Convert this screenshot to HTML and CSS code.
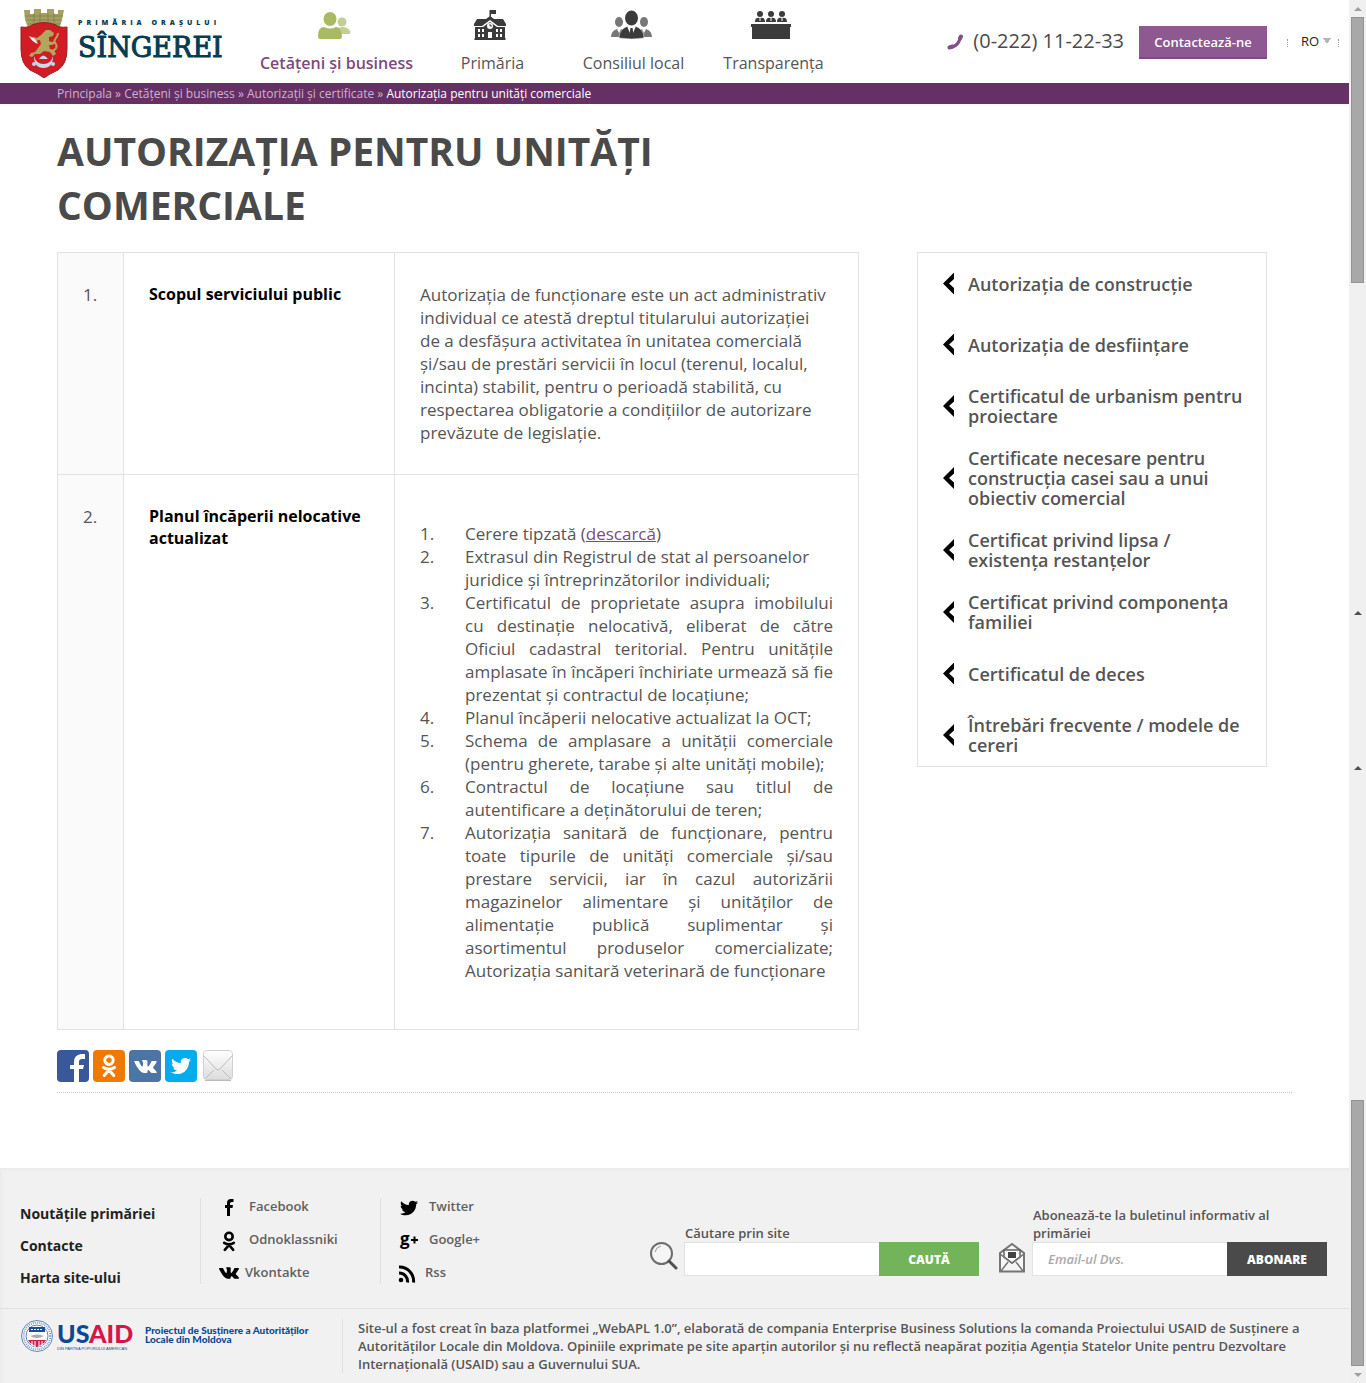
FILE: index.html
```html
<!DOCTYPE html>
<html lang="ro">
<head>
<meta charset="utf-8">
<meta name="viewport" content="width=device-width, initial-scale=1">
<title>Autorizația pentru unități comerciale</title>
<link rel="stylesheet" href="styles.css">
</head>
<body>
<svg class="sprite" aria-hidden="true">
  <symbol id="i-twitter" viewBox="0 0 512 512"><path d="M459.37 151.716c.325 4.548.325 9.097.325 13.645 0 138.72-105.583 298.558-298.558 298.558-59.452 0-114.68-17.219-161.137-47.106 8.447.974 16.568 1.299 25.34 1.299 49.055 0 94.213-16.568 130.274-44.832-46.132-.975-84.792-31.188-98.112-72.772 6.498.974 12.995 1.624 19.818 1.624 9.421 0 18.843-1.3 27.614-3.573-48.081-9.747-84.143-51.98-84.143-102.985v-1.299c13.969 7.797 30.214 12.67 47.431 13.319-28.264-18.843-46.781-51.005-46.781-87.391 0-19.492 5.197-37.36 14.294-52.954 51.655 63.675 129.3 105.258 216.365 109.807-1.624-7.797-2.599-15.918-2.599-24.04 0-57.828 46.782-104.934 104.934-104.934 30.213 0 57.502 12.67 76.67 33.137 23.715-4.548 46.456-13.32 66.599-25.34-7.798 24.366-24.366 44.833-46.132 57.827 21.117-2.273 41.584-8.122 60.426-16.243-14.292 20.791-32.161 39.308-52.628 54.253z"/></symbol>
  <symbol id="i-vk" viewBox="0 4 24 16"><path d="M13.162 18.994c.609 0 .858-.406.851-.915-.031-1.917.714-2.949 2.059-1.604 1.488 1.488 1.796 2.519 3.603 2.519h3.2c.808 0 1.126-.26 1.126-.668 0-.863-1.421-2.386-2.625-3.504-1.686-1.565-1.765-1.602-.313-3.486 1.801-2.339 4.157-5.336 2.073-5.336h-3.981c-.772 0-.828.435-1.103 1.083-.995 2.347-2.886 5.387-3.604 4.922-.751-.485-.407-2.406-.35-5.261.015-.754.011-1.271-1.141-1.539-.629-.145-1.241-.205-1.809-.205-2.273 0-3.841.953-2.95 1.119 1.571.293 1.42 3.692 1.054 5.16-.638 2.556-3.036-2.024-4.035-4.305-.241-.548-.315-.974-1.175-.974h-3.255c-.492 0-.787.16-.787.516 0 .602 2.96 6.72 5.786 9.77 2.756 2.975 5.48 2.708 7.376 2.708z"/></symbol>
  <symbol id="i-ok" viewBox="0 0 16 24"><g fill="none" stroke="currentColor" stroke-width="3" stroke-linecap="round"><circle cx="8" cy="6.200" r="4.200"/><path d="M2.500 13.500Q8 17 13.500 13.500M8 16L3.200 21.500M8 16l4.800 5.500"/></g></symbol>
</svg>
<div class="page">
  <header class="header">
    <a class="logo" href="#">
      <svg class="crest" viewBox="0 0 48 70" aria-hidden="true">
        <path d="M4 2h6v4h4V1h7v4h6V1h7v5h4V2h6l-2 10-3 10q-16-7-30 0L5 12z" fill="#a6a063"/>
        <path d="M5 8h38M7 12h34M8 16h32M14 5v11M20 5v11M28 5v11M34 5v11" stroke="#77733f" fill="none" stroke-width=".6"/>
        <path d="M1 19q8 1 11-2 12-5 24 0 3 3 11 2v22q0 15-9 21-9 4-14 8-5-4-14-8-9-6-9-21z" fill="#d01c22" stroke="#8b2324"/>
        <path d="M24 24l2-2 4 0 4 3-1 3-4 1 0 4 3 1 3-1 1 2-4 2-3 0 1 4 4 1 2 4-3 2-3-4-6-1-4 3-5 0-3 3-3-1 2-3 4-1 3-4 3-4-1-4-5 1-3-2 1-2 4 1 4-3z" fill="#b3a55e"/>
        <path d="M32 43q6-2 4-7-3-2 0-6 2-2 2-5" stroke="#b3a55e" stroke-width="2" fill="none"/>
        <path d="M9 28q7 2 9 8-6-2-9-8z" fill="#e8eef4"/>
        <path d="M14 48q0 12 9.500 12T33 48q-2 8-9.500 8T14 48z" fill="#c9d9e8"/>
        <path d="M19 51q4-7 9 0z" fill="#c9d9e8"/>
        <circle cx="14" cy="56" r="2" fill="#b9dcf0"/><circle cx="33" cy="56" r="2" fill="#b9dcf0"/>
      </svg>
      <span class="logo-text"><span class="logo-top">PRIMĂRIA ORAȘULUI</span><span class="logo-name">SÎNGEREI</span></span>
    </a>
    <nav class="nav">
      <a class="nav-item active" href="#">
        <svg width="32" height="30" viewBox="0 0 32 30"><g fill="#c2cf93"><circle cx="24" cy="12" r="4.500"/><path d="M20 24v-6q8-3 12 3v3z"/></g><g fill="#a9ba65"><ellipse cx="12" cy="9" rx="6.500" ry="7"/><path d="M0 26q0-9 6-9 6 3 12 0 5 0 6 9 0 3-2 3H2q-2 0-2-3z"/></g></svg>
        Cetățeni și business</a>
      <a class="nav-item" href="#">
        <svg width="32" height="30" viewBox="0 0 32 30"><g fill="#3b3b3b"><path d="M15.500 0H22v4h-5v4h-1.500zM0 14l3-5h9l4-3 4 3h9l3 5v2h-8l-8-6-8 6H0z"/><path d="M1 17h8l7-5 7 5h8v13H1z"/></g><g fill="#fff"><circle cx="16" cy="16" r="3"/><path d="M4 19h2v3H4zM8 19h2v3H8zM4 24h2v3H4zM8 24h2v3H8zM22 19h2v3h-2zM26 19h2v3h-2zM22 24h2v3h-2zM26 24h2v3h-2zM14 22h4v6h-4z"/></g><path d="M16 14v2h2M0 29h32" fill="none" stroke="#3b3b3b"/></svg>
        Primăria</a>
      <a class="nav-item" href="#">
        <svg width="41" height="30" viewBox="0 0 41 30"><g fill="#777"><ellipse cx="8" cy="12" rx="4" ry="5"/><ellipse cx="33" cy="12" rx="4" ry="5"/><path d="M0 27q0-6 6-8l2 4 2-4 4 2v6zM41 27q0-6-6-8l-2 4-2-4-4 2v6z"/></g><ellipse cx="20.500" cy="8" rx="6.500" ry="7.500" fill="#3b3b3b"/><path d="M8 28q0-9 9-12l3.500 7 3.500-7q9 3 9 12-12 2-25 0z" fill="#3b3b3b" stroke="#fff" stroke-width=".5"/><path d="M16 16l4.500 11L25 16l-3 1h-3z" fill="#fff"/><path d="M19.500 18h2l1 6-2 4-2-4z" fill="#3b3b3b"/></svg>
        Consiliul local</a>
      <a class="nav-item" href="#">
        <svg width="40" height="30" viewBox="0 0 40 30"><g fill="#3b3b3b"><circle cx="9" cy="4" r="3"/><circle cx="20" cy="4" r="3"/><circle cx="31" cy="4" r="3"/><path d="M4 12q0-5 5-4 5-1 5 4zM15 12q0-5 5-4 5-1 5 4zM26 12q0-5 5-4 5-1 5 4zM0 14h40v3h-1v12H1V17H0z"/></g><path d="M9 8v3M20 8v3M31 8v3" stroke="#fff"/></svg>
        Transparența</a>
    </nav>
    <div class="contact">
      <svg width="16" height="16" viewBox="0 0 16 16" aria-hidden="true"><path d="M2 13.500Q12 13 13.500 2" fill="none" stroke="#85508a" stroke-width="3"/><path d="M2.500 13.500l3-1M13 4.500l1-2" fill="none" stroke="#85508a" stroke-width="4" stroke-linecap="round"/></svg>
      <span class="phone">(0-222) 11-22-33</span>
      <button class="contact-btn" type="button">Contactează-ne</button>
    </div>
    <div class="lang"><select aria-label="Limba"><option>RO</option></select></div>
  </header>
  <nav class="crumbs"><a href="#">Principala</a> » <a href="#">Cetățeni și business</a> » <a href="#">Autorizații și certificate</a> » <span>Autorizația pentru unități comerciale</span></nav>

  <div class="content">
    <div class="columns">
      <main class="main">
        <h1>AUTORIZAȚIA PENTRU UNITĂȚI COMERCIALE</h1>
        <table class="info">
          <tr>
            <td class="num">1.</td>
            <th scope="row">Scopul serviciului public</th>
            <td>Autorizaţia de funcționare este un act administrativ individual ce atestă dreptul titularului autorizaţiei de a desfăşura activitatea în unitatea comercială şi/sau de prestări servicii în locul (terenul, localul, incinta) stabilit, pentru o perioadă stabilită, cu respectarea obligatorie a condiţiilor de autorizare prevăzute de legislaţie.</td>
          </tr>
          <tr>
            <td class="num">2.</td>
            <th scope="row">Planul încăperii nelocative actualizat</th>
            <td>
              <ol class="docs">
                <li>Cerere tipzată (<a href="#">descarcă</a>)</li>
                <li>Extrasul din Registrul de stat al persoanelor juridice și întreprinzătorilor individuali;</li>
                <li class="just">Certificatul de proprietate asupra imobilului cu destinaţie nelocativă, eliberat de către Oficiul cadastral teritorial. Pentru unităţile amplasate în încăperi închiriate urmează să fie prezentat şi contractul de locaţiune;</li>
                <li class="just">Planul încăperii nelocative actualizat la OCT;</li>
                <li class="just">Schema de amplasare a unităţii comerciale (pentru gherete, tarabe şi alte unităţi mobile);</li>
                <li class="just">Contractul de locaţiune sau titlul de autentificare a deţinătorului de teren;</li>
                <li class="just">Autorizaţia sanitară de funcţionare, pentru toate tipurile de unităţi comerciale şi/sau prestare servicii, iar în cazul autorizării magazinelor alimentare şi unităţilor de alimentaţie publică suplimentar şi asortimentul produselor comercializate; Autorizaţia sanitară veterinară de funcţionare</li>
              </ol>
            </td>
          </tr>
        </table>
      </main>
      <aside class="side">
        <ul>
          <li><a href="#">Autorizația de construcție</a></li>
          <li><a href="#">Autorizația de desființare</a></li>
          <li><a href="#">Certificatul de urbanism pentru proiectare</a></li>
          <li><a href="#">Certificate necesare pentru construcția casei sau a unui obiectiv comercial</a></li>
          <li><a href="#">Certificat privind lipsa / existența restanțelor</a></li>
          <li><a href="#">Certificat privind componența familiei</a></li>
          <li><a href="#">Certificatul de deces</a></li>
          <li><a href="#">Întrebări frecvente / modele de cereri</a></li>
        </ul>
      </aside>
    </div>
    <div class="share">
      <a class="fb" href="#" aria-label="Facebook"><svg viewBox="0 0 32 32"><path d="M17 32V19h-4v-4h4v-3q0-7 7-8h4v5h-3q-3 0-3 3v3h5l-1 4h-4v13z" fill="#fff"/></svg></a>
      <a class="ok" href="#" aria-label="Odnoklassniki"><svg viewBox="0 0 32 32"><use href="#i-ok" x="8" y="3" width="16" height="26"/></svg></a>
      <a class="vk" href="#" aria-label="Vkontakte"><svg viewBox="0 0 32 32" fill="#fff"><use href="#i-vk" x="5" y="9" width="23" height="15"/></svg></a>
      <a class="tw" href="#" aria-label="Twitter"><svg viewBox="0 0 32 32" fill="#fff"><use href="#i-twitter" x="6" y="6" width="20" height="20"/></svg></a>
      <a class="ml" href="#" aria-label="E-mail"><svg viewBox="0 0 32 32"><defs><linearGradient id="env" x2="0" y2="1"><stop stop-color="#fff"/><stop offset="1" stop-color="#dcdcdc"/></linearGradient></defs><rect x="2.500" y=".5" width="29" height="29" rx="3" fill="url(#env)" stroke="#d0d0d0"/><path d="M3 6l12 13q2 2 4 0L31 6M4 29l9-9M30 29l-9-9" fill="none" stroke="#bdbdbd"/><path d="M4 30.500h26" stroke="#bbb"/></svg></a>
    </div>
  </div>

  <footer class="footer">
    <div class="foot-top">
      <nav class="foot-links"><a href="#">Noutățile primăriei</a><a href="#">Contacte</a><a href="#">Harta site-ului</a></nav>
      <nav class="social">
        <a href="#"><svg viewBox="0 0 22 22"><path d="M9 18v-8H7V7h2V5q0-4 4-4h2.500v3H14q-2 0-2 1.500V7h3l-.5 3H12v8z"/></svg>Facebook</a>
        <a href="#"><svg viewBox="0 0 22 22"><use href="#i-ok" x="4" y="0" width="14" height="21"/></svg>Odnoklassniki</a>
        <a class="tight" href="#"><svg viewBox="0 0 22 22"><use href="#i-vk" x="1" y="2" width="20" height="14"/></svg>Vkontakte</a>
      </nav>
      <nav class="social">
        <a href="#"><svg viewBox="0 0 22 22"><use href="#i-twitter" x="2" y="1" width="18" height="18"/></svg>Twitter</a>
        <a href="#"><svg viewBox="0 0 22 22"><text class="gplus" x="2" y="14">g</text><path d="M13 9h7M16.500 5.500v7" stroke="#000" stroke-width="2"/></svg>Google+</a>
        <a class="tight" href="#"><svg viewBox="0 0 22 22"><circle cx="3" cy="16" r="2.300"/><path d="M1 9a8.500 8.500 0 0 1 8.500 9.500M1 3a14 14 0 0 1 14.500 15.500" fill="none" stroke="#000" stroke-width="3"/></svg>Rss</a>
      </nav>
      <div class="forms">
        <form class="form">
          <svg width="28" height="34" viewBox="0 0 28 34" aria-hidden="true"><circle cx="11.500" cy="11.500" r="10.500" fill="#f5f5f5" stroke="#6d6d6d" stroke-width="2"/><path d="M5 10q1-5 6-6" stroke="#999" fill="none"/><path d="M19 19l7 7" stroke="#505050" stroke-width="3" stroke-linecap="round"/></svg>
          <div class="field">
            <label for="q">Căutare prin site</label>
            <div class="row"><input id="q" type="text"><button class="green" type="button">CAUTĂ</button></div>
          </div>
        </form>
        <form class="form">
          <svg width="28" height="34" viewBox="0 0 28 34" aria-hidden="true"><path d="M2 11l12-9 12 9v18.500H2z" fill="#f5f5f5" stroke="#757575" stroke-width="2"/><path d="M6 15V8h16v7l-8 6z" fill="#fff" stroke="#606060" stroke-width="1.500"/><path d="M10 10h8v6h-8z" fill="#444"/><path d="M2 12l12 9 12-9M3 29l7-9M25 29l-7-9" fill="none" stroke="#757575" stroke-width="1.500"/></svg>
          <div class="field">
            <label for="em">Abonează-te la buletinul informativ al primăriei</label>
            <div class="row"><input id="em" type="email" placeholder="Email-ul Dvs."><button class="dark" type="button">ABONARE</button></div>
          </div>
        </form>
      </div>
    </div>
    <div class="foot-bottom">
      <div class="usaid">
        <svg width="34" height="34" viewBox="0 0 34 34" aria-hidden="true"><circle cx="17" cy="17" r="15.500" fill="#fff" stroke="#5f86b5"/><circle cx="17" cy="17" r="13.300" fill="none" stroke="#7f9cc2" stroke-width="2" stroke-dasharray="1 1"/><circle cx="17" cy="17" r="11" fill="#fff" stroke="#5f86b5"/><path d="M9 8h16v5H9z" fill="#1c4f91"/><path d="M11 10.500h12" stroke="#fff" stroke-dasharray="2 1"/><path d="M10 17q7-3 14 0-7 4-14 0z" fill="#aaa"/><path d="M8 21h18l-2 3-7 4-7-4z" fill="#c9234a"/><path d="M12 22v5M15 22v6M19 22v6M22 22v5" stroke="#fff"/></svg>
        <div class="usaid-mark"><span class="usaid-name">US<b>AID</b></span><span class="usaid-tag">DIN PARTEA POPORULUI AMERICAN</span></div>
        <p>Proiectul de Susținere a Autorităților Locale din Moldova</p>
      </div>
      <p class="legal">Site-ul a fost creat în baza platformei „WebAPL 1.0”, elaborată de compania Enterprise Business Solutions la comanda Proiectului USAID de Susținere a Autorităților Locale din Moldova. Opiniile exprimate pe site aparțin autorilor și nu reflectă neapărat poziția Agenţia Statelor Unite pentru Dezvoltare Internaţională (USAID) sau a Guvernului SUA.</p>
    </div>
  </footer>
</div>
<div class="scroll" aria-hidden="true">
  <span class="arrow up"></span>
  <span class="thumb"></span>
  <span class="arrow up mark first"></span>
  <span class="arrow up mark second"></span>
  <span class="thumb last"></span>
  <span class="arrow down"></span>
</div>
</body>
</html>
```
FILE: styles.css
```css
* { box-sizing: border-box; }
body { margin: 0; display: flex; min-height: 100vh; background: #fff; color: #4a4a4a; font-family: "Open Sans", "Noto Sans", sans-serif; font-size: 13px; }
a { color: inherit; text-decoration: none; }
svg { display: block; flex: none; }
.sprite { position: absolute; width: 0; height: 0; }
.page { flex: 1; min-width: 0; display: flex; flex-direction: column; }

/* header */
.header { display: flex; height: 83px; padding-left: 20px; }
.logo { display: flex; width: 231px; padding-top: 8px; gap: 10px; }
.crest { width: 48px; height: 70px; }
.logo-text { display: flex; flex-direction: column; gap: 3px; color: #073b50; white-space: nowrap; padding-top: 10px; }
.logo-top { font-size: 7px; line-height: 10px; font-weight: 800; letter-spacing: 4px; }
.logo-name { font: 27px/34px "DejaVu Serif", serif; -webkit-text-stroke: 1px #073b50; }
.nav { display: grid; grid-template-columns: 171px 141px 141px 139px; padding-top: 10px; }
.nav-item { display: flex; flex-direction: column; align-items: center; gap: 12px; font-size: 16px; line-height: 22px; color: #555; }
.nav-item svg { margin-right: 5px; }
.nav-item.active { color: #7c4a80; font-weight: 600; }
.contact { display: flex; align-items: center; margin-left: auto; margin-right: 20px; height: 85px; }
.contact svg { margin-bottom: 2px; }
.phone { font-size: 20px; line-height: 24px; font-weight: 500; margin: 0 15px 0 10px; padding-bottom: 4px; }
.contact-btn { height: 33px; width: 128px; padding: 0; border: 0; border-bottom: 2px solid #7b4c7f; background: #8e5890; color: #fff; font: 600 13px/18px "Open Sans", sans-serif; }
.lang { display: flex; align-items: center; align-self: center; width: 52px; margin-right: 10px; padding-left: 14px; position: relative; }
.lang::before, .lang::after { content: ""; position: absolute; top: 8px; height: 8px; border-left: 1px dotted #999; }
.lang::before { left: 0; }
.lang::after { right: 0; }
.lang select { appearance: none; border: 0; padding: 0 0 2px; width: 32px; height: 22px; color: #222; font: 13px/20px "Open Sans", sans-serif; background: linear-gradient(to bottom right, #b5b5b5 50%, transparent 50%) 26px 7px / 4px 6px no-repeat, linear-gradient(to bottom left, #b5b5b5 50%, transparent 50%) 22px 7px / 4px 6px no-repeat; }
.crumbs { height: 21px; padding-left: 57px; background: #663065; color: #cfb2d0; font-size: 12px; line-height: 21px; }
.crumbs span { color: #fff; }

/* content */
.content { padding: 20px 57px 0; }
.columns { display: flex; gap: 58px; align-items: flex-start; padding-right: 25px; }
.main { flex: 1; min-width: 0; }
h1 { margin: 0 0 20px; font-size: 39px; line-height: 54px; font-weight: 700; }
.info { width: 100%; border-collapse: collapse; table-layout: fixed; font-size: 17px; line-height: 23px; color: #555; }
.info td, .info th { border: 1px solid #e2e2e2; padding: 30px 25px; vertical-align: top; text-align: left; }
.info .num { width: 66px; background: #fafafa; }
.info th { width: 271px; color: #000; font-size: 16px; line-height: 22px; font-weight: 700; }
.docs { margin: 17px 0; padding: 0; list-style: none; counter-reset: doc; }
.docs li { padding-left: 45px; counter-increment: doc; }
.docs li::before { content: counter(doc) "."; float: left; margin-left: -45px; }
.docs .just { text-align: justify; }
.docs a { color: #7c4a80; text-decoration: underline; }
.side { width: 350px; margin-top: 128px; border: 1px solid #e2e2e2; padding: 0 16px 0 25px; }
.side ul { margin: 0; padding: 0; list-style: none; }
.side a { display: flex; align-items: center; min-height: 61px; padding: 11px 0; font-size: 18px; line-height: 20px; font-weight: 600; color: #555; }
.side a::before { content: ""; flex: none; width: 11px; height: 22px; margin-right: 14px; background: #000; clip-path: polygon(100% 0, 0 50%, 100% 100%, 100% 70%, 55% 50%, 100% 30%); }
.share { display: flex; gap: 4px; padding: 20px 0 10px; border-bottom: 1px dotted #ccc; }
.share a { width: 32px; height: 32px; border-radius: 4px; overflow: hidden; color: #fff; }
.share .fb { background: #39579a; }
.share .ok { background: #ee7a05; }
.share .vk { background: #4d75a3; }
.share .tw { background: #05aced; }

/* footer */
.footer { margin-top: 75px; flex: 1; background: #f1f1f1; box-shadow: inset 2px 2px 2px #ebebeb; font-weight: 600; color: #555; }
.foot-top { display: flex; height: 140px; padding: 30px 22px 0 20px; }
.foot-links { width: 180px; display: flex; flex-direction: column; font-size: 14px; line-height: 32px; font-weight: 700; color: #222; }
.social { width: 180px; height: 86px; border-left: 1px solid #e0e0e0; padding-left: 17px; color: #606060; }
.social a { display: flex; align-items: flex-start; gap: 9px; height: 33px; line-height: 17px; }
.social svg { width: 22px; height: 22px; fill: #000; color: #000; overflow: visible; }
.social .tight { gap: 5px; }
.gplus { font: 700 17px "Open Sans", sans-serif; }
.forms { display: flex; align-items: flex-end; gap: 19px; margin-left: auto; height: 78px; }
.form { display: flex; align-items: flex-end; gap: 6px; }
.field { width: 295px; line-height: 18px; }
.field label { display: block; padding-right: 50px; padding-left: 1px; }
.row { display: flex; }
.row input { flex: 1; min-width: 0; height: 34px; border: 1px solid #e2e2e2; border-right: 0; padding: 0 15px; background: #fff; font: 600 13px "Open Sans", sans-serif; }
.row input::placeholder { color: #aaa; font-style: italic; opacity: 1; }
.row button { width: 100px; height: 34px; border: 0; padding: 0; color: #fff; font: 800 12px "Open Sans", sans-serif; }
.green { background: #73b45b; }
.dark { background: #4a4a4a; }
.foot-bottom { display: flex; border-top: 1px solid #e0e0e0; padding: 10px 40px 10px 20px; }
.usaid { display: flex; align-items: flex-start; width: 323px; height: 54px; border-right: 1px solid #e0e0e0; }
.usaid-mark { display: flex; flex-direction: column; flex: none; width: 76px; margin: 1px 12px 0 3px; white-space: nowrap; }
.usaid-name { font: 900 25px/26px Lato, sans-serif; color: #0b4a93; }
.usaid-name b { font-weight: 900; color: #d3174a; }
.usaid-tag { font: 4px/6px "Liberation Sans", sans-serif; color: #0b4a93; }
.usaid p { margin: 7px 0 0; padding-right: 30px; font: 900 10px/9px Lato, sans-serif; color: #0b4a93; }
.legal { flex: 1; margin: 0; padding-left: 15px; line-height: 18px; }

/* scroll rail */
.scroll { width: 17px; background: #f0f0f0; display: flex; flex-direction: column; align-items: center; }
.arrow { width: 17px; height: 17px; display: flex; align-items: center; justify-content: center; }
.arrow::before { content: ""; border: 4px solid transparent; }
.up::before { border-top: 0; border-bottom-color: #a0a0a0; }
.down::before { border-bottom: 0; border-top-color: #a0a0a0; }
.mark::before { border-bottom-color: #505050; }
.first { margin-top: 321px; }
.second { margin-top: 138px; }
.thumb { width: 13px; height: 266px; background: #a8a8a8; border: 1px solid #949494; }
.last { margin-top: auto; }
```
